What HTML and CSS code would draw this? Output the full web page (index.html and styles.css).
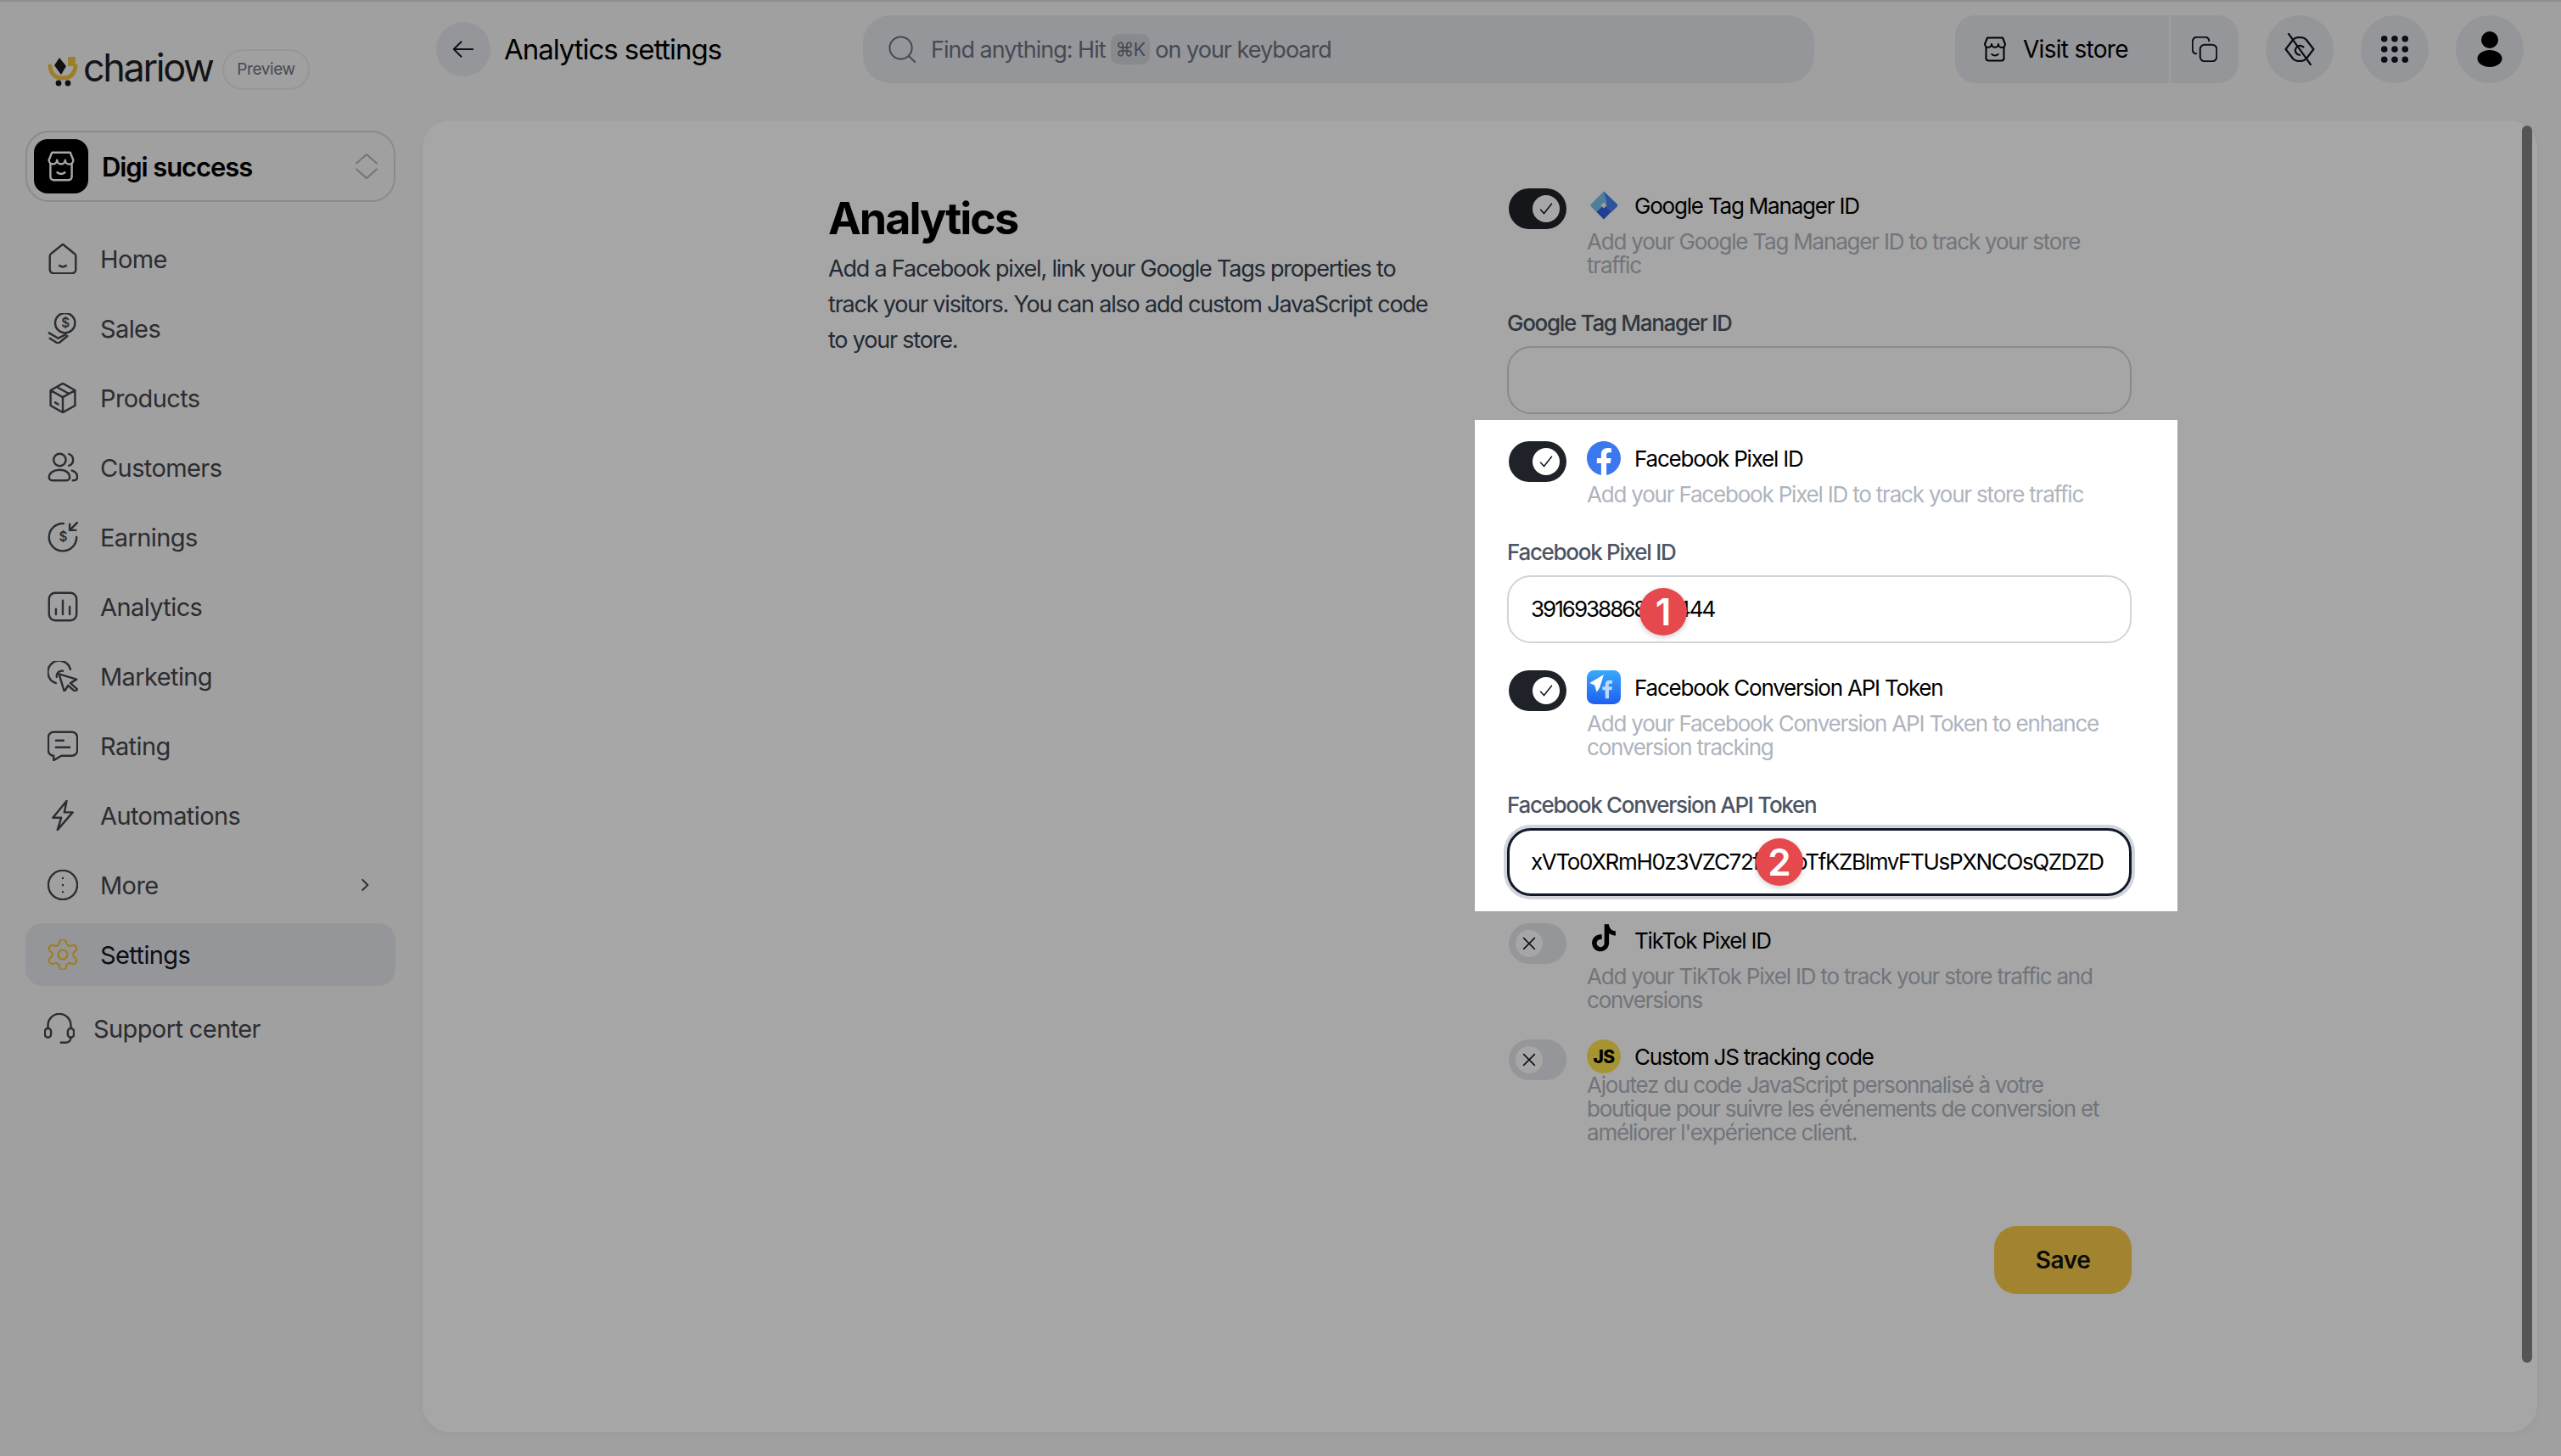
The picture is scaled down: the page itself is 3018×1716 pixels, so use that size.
FILE: index.html
```html
<!DOCTYPE html>
<html lang="en">
<head>
  <meta charset="UTF-8">
  <title>Analytics settings</title>
  <link rel="stylesheet" href="styles.css">
</head>
<body>

  <div class="app">

    <aside class="sidebar">
      <div class="brand">
        <svg class="brand-mark" viewBox="0 0 36 36">
          <path d="M3 12c1 9 6 14 15 14s14-5 15-14" fill="none" stroke="#f2c443" stroke-width="5" stroke-linecap="round"/>
          <path d="M14 2l8 10-6 10-8-11z" fill="#1a1a1a"/>
          <rect x="24" y="1" width="9" height="11" fill="#f2c443"/>
          <circle cx="13" cy="32" r="3.4" fill="#1a1a1a"/>
          <circle cx="24" cy="32" r="3.4" fill="#1a1a1a"/>
        </svg>
        <span class="brand-name">chariow</span>
        <span class="preview-pill">Preview</span>
      </div>

      <div class="store-select">
        <span class="store-avatar">
          <svg class="icon icon-store" viewBox="2 2 20 20"><path d="M5 10v9a2 2 0 0 0 2 2h10a2 2 0 0 0 2-2v-9M4 8l2-5h12l2 5M4 8a2.67 2.67 0 0 0 5.33 0 2.67 2.67 0 0 0 5.33 0A2.67 2.67 0 0 0 20 8M9.5 16c1.5 1.2 3.5 1.2 5 0"/></svg>
        </span>
        <span class="store-name">Digi success</span>
        <svg class="store-arrows" viewBox="0 0 28 30"><path d="M1.5 12L14 1l12.5 11M1.5 18L14 29l12.5-11"/></svg>
      </div>

      <nav class="nav">
        <a class="nav-item">
          <svg class="icon" viewBox="2 2 20 20"><path d="M12 2.5l7.5 6a2 2 0 0 1 1 1.7V19a2.5 2.5 0 0 1-2.5 2.500H6A2.500 2.500 0 0 1 3.500 19v-8.800a2 2 0 0 1 1-1.700zM9.800 16.500c1.400 1 3 1 4.400 0"/></svg>
          <span>Home</span>
        </a>
        <a class="nav-item">
          <svg class="icon" viewBox="2 2 20 20"><circle cx="13.5" cy="8.5" r="6.5"/><text x="13.5" y="11.5" class="icon-text">$</text><path d="M3 15l6 3.5 5-2.5M3.5 18.5L9 22l6-5"/></svg>
          <span>Sales</span>
        </a>
        <a class="nav-item">
          <svg class="icon" viewBox="2 2 20 20"><path d="M12 2.5L20 7v10l-8 4.5L4 17V7zM4 7l8 4.5L20 7M12 11.5v10M8 4.8l8 4.4M7 15l2 1.2"/></svg>
          <span>Products</span>
        </a>
        <a class="nav-item">
          <svg class="icon" viewBox="2 2 20 20"><circle cx="10" cy="7" r="4"/><path d="M16 3.2a4 4 0 0 1 0 7.6M3 18.5c0-3 3-5 7-5s6.5 2 6.5 5a2 2 0 0 1-2 2H5a2 2 0 0 1-2-2zM18 14c2 .6 3.5 2 3.5 4.2 0 1.5-1 2.300-3 2.300"/></svg>
          <span>Customers</span>
        </a>
        <a class="nav-item">
          <svg class="icon" viewBox="2 2 20 20"><path d="M12.5 3.1A9 9 0 1 0 21 12M21.5 2.5l-4.700 4.700M16.5 3.500v4h4"/><text x="12" y="15" class="icon-text">$</text></svg>
          <span>Earnings</span>
        </a>
        <a class="nav-item">
          <svg class="icon" viewBox="2 2 20 20"><rect x="3" y="3" width="18" height="18" rx="4"/><path d="M7.5 17v-3.5M12 17V8M16.5 17v-5"/></svg>
          <span>Analytics</span>
        </a>
        <a class="nav-item">
          <svg class="icon" viewBox="2 2 20 20"><path d="M7.5 16.5A7.5 7.5 0 1 1 17 7.5M8 12.5a3.5 3.5 0 0 1 4-4M9.5 10.5L21 14l-4 2.5 4.5 4-1.5 1.5-4.5-4-2.5 4z"/></svg>
          <span>Marketing</span>
        </a>
        <a class="nav-item">
          <svg class="icon" viewBox="2 2 20 20"><path d="M6 3h12a3.5 3.5 0 0 1 3.5 3.5V15a3.5 3.5 0 0 1-3.5 3.5h-7l-5 3v-3A3.5 3.5 0 0 1 2.5 15V6.5A3.5 3.5 0 0 1 6 3zM7.5 8.5h5M7.5 13h9"/></svg>
          <span>Rating</span>
        </a>
        <a class="nav-item">
          <svg class="icon" viewBox="2 2 20 20"><path d="M14.5 2.5L5.5 13.5H11L8.5 21.5 18.5 10H13z"/></svg>
          <span>Automations</span>
        </a>
        <a class="nav-item">
          <svg class="icon" viewBox="2 2 20 20"><circle cx="12" cy="12" r="9.5"/><path d="M12 7.5v.1M12 12v.1M12 16.5v.1"/></svg>
          <span>More</span>
          <svg class="nav-chevron" viewBox="0 0 24 24"><path d="M8 4l8 8-8 8"/></svg>
        </a>
        <a class="nav-item active">
          <svg class="icon" viewBox="2 2 20 20"><path d="M12.22 2h-.44a2 2 0 0 0-2 2v.18a2 2 0 0 1-1 1.73l-.43.25a2 2 0 0 1-2 0l-.15-.08a2 2 0 0 0-2.73.73l-.22.38a2 2 0 0 0 .73 2.73l.15.1a2 2 0 0 1 1 1.72v.51a2 2 0 0 1-1 1.74l-.15.09a2 2 0 0 0-.73 2.73l.22.38a2 2 0 0 0 2.73.73l.15-.08a2 2 0 0 1 2 0l.43.25a2 2 0 0 1 1 1.73V20a2 2 0 0 0 2 2h.44a2 2 0 0 0 2-2v-.18a2 2 0 0 1 1-1.73l.43-.25a2 2 0 0 1 2 0l.15.08a2 2 0 0 0 2.73-.73l.22-.39a2 2 0 0 0-.73-2.73l-.15-.08a2 2 0 0 1-1-1.74v-.5a2 2 0 0 1 1-1.74l.15-.09a2 2 0 0 0 .73-2.73l-.22-.38a2 2 0 0 0-2.73-.73l-.15.08a2 2 0 0 1-2 0l-.43-.25a2 2 0 0 1-1-1.73V4a2 2 0 0 0-2-2z"/><circle cx="12" cy="12" r="3"/></svg>
          <span>Settings</span>
        </a>
        <a class="nav-item support">
          <svg class="icon" viewBox="2 2 20 20"><path d="M4.5 12v-2a7.5 7.5 0 0 1 15 0v2M19.5 18c0 2-1.5 3.3-3.5 3.3h-3"/><rect x="2.5" y="12" width="4" height="6" rx="2"/><rect x="17.5" y="12" width="4" height="6" rx="2"/></svg>
          <span>Support center</span>
        </a>
      </nav>
    </aside>

    <div class="main">
      <header class="topbar">
        <div class="page-title">
          <button class="back-btn">
            <svg viewBox="0 0 24 24"><path d="M21 12H3M10 5l-7 7 7 7"/></svg>
          </button>
          <h1>Analytics settings</h1>
        </div>

        <div class="search">
          <svg class="icon icon-search" viewBox="1 1 22 22"><circle cx="11" cy="11" r="9"/><path d="M17.5 17.5l5 5"/></svg>
          <span>Find anything: Hit</span>
          <kbd>⌘K</kbd>
          <span>on your keyboard</span>
        </div>

        <div class="actions">
          <div class="visit-group">
            <a class="visit-btn">
              <svg class="icon icon-visit" viewBox="3 2 18 20"><path d="M5 10v9a2 2 0 0 0 2 2h10a2 2 0 0 0 2-2v-9M4 8l2-5h12l2 5M4 8a2.67 2.67 0 0 0 5.33 0 2.67 2.67 0 0 0 5.33 0A2.67 2.67 0 0 0 20 8M9.5 16c1.5 1.2 3.5 1.2 5 0"/></svg>
              Visit store
            </a>
            <a class="copy-btn">
              <svg class="icon icon-visit" viewBox="2 2 20 20"><rect x="8.5" y="8.5" width="13" height="13" rx="3.5"/><path d="M15.5 5.5a3 3 0 0 0-3-3H6A3.5 3.5 0 0 0 2.5 6v6.500a3 3 0 0 0 3 3"/></svg>
            </a>
          </div>
          <a class="round-btn">
            <svg class="icon icon-eye" viewBox="2 1 20 22"><path d="M2.5 12l5-6.500a5 5 0 0 1 3-1.500h3a5 5 0 0 1 3 1.500l5 6.500-5 6.500a5 5 0 0 1-3 1.500h-3a5 5 0 0 1-3-1.500z"/><path d="M14.5 10.5A3.2 3.200 0 1 0 12 16M4.5 1.5l15 21"/></svg>
          </a>
          <a class="round-btn">
            <svg class="icon-grid" viewBox="0 0 36 36"><circle cx="5" cy="5" r="4"/><circle cx="18" cy="5" r="4"/><circle cx="31" cy="5" r="4"/><circle cx="5" cy="18" r="4"/><circle cx="18" cy="18" r="4"/><circle cx="31" cy="18" r="4"/><circle cx="5" cy="31" r="4"/><circle cx="18" cy="31" r="4"/><circle cx="31" cy="31" r="4"/></svg>
          </a>
          <a class="round-btn">
            <svg class="icon-user" viewBox="0 0 30 42"><ellipse cx="15" cy="10" rx="10" ry="10"/><ellipse cx="15" cy="32" rx="14.5" ry="10"/></svg>
          </a>
        </div>
      </header>

      <main class="panel">
        <section class="intro">
          <h2>Analytics</h2>
          <p>Add a Facebook pixel, link your Google Tags properties to<br>track your visitors. You can also add custom JavaScript code<br>to your store.</p>
        </section>

        <section class="settings">

          <div class="integration">
            <div class="toggle on"><span class="knob"><svg viewBox="0 0 16 16"><path d="M3 8.5l3.2 3.5L13 3.5"/></svg></span></div>
            <div class="integration-body">
              <div class="integration-title">
                <svg class="brand-icon" viewBox="-2 -2 28 28">
                  <path d="M12 .5L1.5 11a1.5 1.5 0 0 0 0 2L12 23.5 23 12z" fill="#7bc3f0"/>
                  <path d="M12 .5L23 11a1.5 1.5 0 0 1 0 2l-5 5-6-6 2.500-2.500z" fill="#4a80ef"/>
                  <path d="M12 23.5l-6-6 6-5.500 6 5.500z" fill="#3160e4"/>
                  <path d="M12 9.5l2.500 2.500-2.500 2.500-2.500-2.500z" fill="#f4f6fb"/>
                </svg>
                Google Tag Manager ID
              </div>
              <p class="integration-desc">Add your Google Tag Manager ID to track your store<br>traffic</p>
            </div>
          </div>
          <div class="field">
            <label>Google Tag Manager ID</label>
            <div class="text-input"></div>
          </div>

          <div class="integration">
            <div class="toggle on"><span class="knob"><svg viewBox="0 0 16 16"><path d="M3 8.5l3.2 3.5L13 3.5"/></svg></span></div>
            <div class="integration-body">
              <div class="integration-title">
                <svg class="brand-icon" viewBox="0 0 24 24">
                  <circle cx="12" cy="12" r="11.5" fill="#fff"/>
                  <path d="M24 12.073c0-6.627-5.373-12-12-12s-12 5.373-12 12c0 5.990 4.388 10.954 10.125 11.854v-8.385H7.078v-3.470h3.047V9.430c0-3.007 1.792-4.669 4.533-4.669 1.312 0 2.686.235 2.686.235v2.953H15.830c-1.491 0-1.956.925-1.956 1.874v2.250h3.328l-.532 3.470h-2.796v8.385C19.612 23.027 24 18.062 24 12.073z" fill="#3b78ef"/>
                </svg>
                Facebook Pixel ID
              </div>
              <p class="integration-desc">Add your Facebook Pixel ID to track your store traffic</p>
            </div>
          </div>
          <div class="field">
            <label>Facebook Pixel ID</label>
            <div class="text-input filled">3916938868123444</div>
            <span class="step-badge step-one">1</span>
          </div>

          <div class="integration">
            <div class="toggle on"><span class="knob"><svg viewBox="0 0 16 16"><path d="M3 8.5l3.2 3.5L13 3.5"/></svg></span></div>
            <div class="integration-body">
              <div class="integration-title">
                <svg class="brand-icon" viewBox="0 0 24 24">
                  <defs>
                    <linearGradient id="capiFill" x1="0" y1="0" x2="0" y2="1">
                      <stop offset="0" stop-color="#39a9fb"/>
                      <stop offset="1" stop-color="#1d5ff0"/>
                    </linearGradient>
                  </defs>
                  <rect width="24" height="24" rx="5" fill="url(#capiFill)"/>
                  <path d="M12 3L2 9l3.5 1.5 1.5 5 2-3z" fill="#fff"/>
                  <path d="M13 20v-6h-2v-2.500h2V10c0-2 1-3 3-3h2v2.500h-1.500c-.8 0-1 .4-1 1v1H18l-.4 2.500h-2v6z" fill="#bcd8fb"/>
                </svg>
                Facebook Conversion API Token
              </div>
              <p class="integration-desc">Add your Facebook Conversion API Token to enhance<br>conversion tracking</p>
            </div>
          </div>
          <div class="field">
            <label>Facebook Conversion API Token</label>
            <div class="text-input filled focused">xVTo0XRmH0z3VZC72fJ4uoTfKZBlmvFTUsPXNCOsQZDZD</div>
            <span class="step-badge step-two">2</span>
          </div>

          <div class="integration">
            <div class="toggle"><span class="knob"><svg viewBox="0 0 16 16"><path d="M3 3l10 10M13 3L3 13"/></svg></span></div>
            <div class="integration-body">
              <div class="integration-title">
                <svg class="brand-icon" viewBox="-3 -1 30 30"><path d="M12.525.02c1.310-.02 2.610-.01 3.910-.02.08 1.530.63 3.090 1.750 4.170 1.120 1.110 2.700 1.620 4.240 1.790v4.030c-1.440-.05-2.890-.35-4.200-.97-.57-.26-1.100-.59-1.620-.93-.01 2.920.01 5.840-.02 8.750-.08 1.400-.54 2.790-1.350 3.940-1.310 1.920-3.580 3.170-5.910 3.210-1.430.08-2.860-.31-4.080-1.030-2.020-1.190-3.440-3.370-3.650-5.710-.02-.5-.03-1-.01-1.490.18-1.900 1.120-3.720 2.580-4.960 1.660-1.440 3.980-2.130 6.150-1.720.02 1.480-.04 2.960-.04 4.440-.99-.32-2.150-.23-3.020.37-.63.41-1.110 1.040-1.360 1.750-.21.51-.15 1.070-.14 1.610.24 1.640 1.820 3.020 3.500 2.870 1.120-.01 2.190-.66 2.770-1.610.19-.33.4-.67.41-1.060.1-1.790.06-3.570.07-5.360.01-4.030-.01-8.050.02-12.070z" fill="#000"/></svg>
                TikTok Pixel ID
              </div>
              <p class="integration-desc">Add your TikTok Pixel ID to track your store traffic and<br>conversions</p>
            </div>
          </div>

          <div class="integration">
            <div class="toggle"><span class="knob"><svg viewBox="0 0 16 16"><path d="M3 3l10 10M13 3L3 13"/></svg></span></div>
            <div class="integration-body">
              <div class="integration-title">
                <span class="js-icon">JS</span>
                Custom JS tracking code
              </div>
              <p class="integration-desc tight">Ajoutez du code JavaScript personnalisé à votre<br>boutique pour suivre les événements de conversion et<br>améliorer l'expérience client.</p>
            </div>
          </div>

          <div class="form-footer">
            <button class="save-btn">Save</button>
          </div>
        </section>

        <div class="scrollbar"></div>
      </main>
    </div>
  </div>

  <div class="spotlight"></div>

</body>
</html>
```

FILE: styles.css
```css
* {
  box-sizing: border-box;
}

html,
body {
  margin: 0;
  height: 100%;
  overflow: hidden;
}

body {
  font-family: 'Inter', sans-serif;
  background: #f6f6f6;
  color: #111827;
}

.app {
  display: flex;
  height: 1716px;
  border-top: 2px solid #dadada;
}

/* sidebar */

.sidebar {
  flex: none;
  width: 498px;
  padding: 56px 32px 0 30px;
}

.brand {
  display: flex;
  align-items: center;
  height: 48px;
  padding-left: 26px;
}

.brand-mark {
  width: 36px;
  height: 36px;
  margin-top: 4px;
}

.brand-name {
  margin: -6px 12px 0 6px;
  font-size: 45px;
  letter-spacing: -2.4px;
  color: #1f2024;
}

.preview-pill {
  padding: 0 15px;
  height: 48px;
  line-height: 44px;
  border: 2px solid #e6e6e6;
  border-radius: 24px;
  font-size: 19px;
  letter-spacing: -0.4px;
  color: #6b7280;
}

.store-select {
  display: flex;
  align-items: center;
  height: 84px;
  margin-top: 48px;
  padding: 0 18px 0 8px;
  border: 2px solid #d4d4d4;
  border-radius: 28px;
}

.store-avatar {
  display: flex;
  align-items: center;
  justify-content: center;
  width: 64px;
  height: 64px;
  border-radius: 16px;
  background: #000;
}

.icon-store {
  width: 32px;
  height: 32px;
  color: #fff;
}

.store-name {
  flex: 1;
  margin-left: 16px;
  font-size: 31px;
  font-weight: 600;
  letter-spacing: -1.1px;
  color: #000;
}

.store-arrows {
  width: 28px;
  height: 30px;
  fill: none;
  stroke: #b4b4b4;
  stroke-width: 2.2;
}

.icon {
  flex: none;
  width: 36px;
  height: 36px;
  fill: none;
  stroke: currentColor;
  stroke-width: 1.35;
  stroke-linecap: round;
  stroke-linejoin: round;
}

.icon-text {
  font-size: 8.5px;
  font-weight: 600;
  text-anchor: middle;
  fill: currentColor;
  stroke: none;
}

.nav {
  display: flex;
  flex-direction: column;
  gap: 8px;
  margin-top: 30px;
}

.nav-item {
  display: flex;
  align-items: center;
  height: 74px;
  padding: 0 26px;
  border-radius: 20px;
  font-size: 29px;
  letter-spacing: -0.6px;
  color: #43464d;
}

.nav-item .icon {
  margin-right: 26px;
}

.nav-item span {
  flex: 1;
}

.nav-chevron {
  width: 20px;
  height: 20px;
  fill: none;
  stroke: currentColor;
  stroke-width: 2.4;
}

.nav-item.active {
  background: #e5e7eb;
  color: #111827;
}

.nav-item.active .icon {
  color: #f2c443;
}

.nav-item.support {
  margin-top: 5px;
  padding-left: 22px;
}

.nav-item.support .icon {
  margin-right: 22px;
}

/* top bar */

.main {
  flex: 1;
  display: flex;
  flex-direction: column;
  min-width: 0;
}

.topbar {
  display: flex;
  align-items: center;
  flex: none;
  height: 80px;
  margin: 16px 44px 44px 16px;
}

.page-title {
  display: flex;
  align-items: center;
  flex: none;
  width: 503px;
}

.back-btn {
  display: flex;
  align-items: center;
  justify-content: center;
  width: 64px;
  height: 64px;
  padding: 0;
  border: none;
  border-radius: 50%;
  background: #e5e7eb;
}

.back-btn svg {
  width: 30px;
  height: 30px;
  fill: none;
  stroke: #111827;
  stroke-width: 1.5;
  stroke-linecap: round;
  stroke-linejoin: round;
}

h1 {
  margin: 0 0 0 16px;
  font-size: 33px;
  font-weight: 400;
  letter-spacing: -1.05px;
  color: #000;
}

.search {
  display: flex;
  align-items: center;
  flex: 1;
  height: 80px;
  padding-left: 30px;
  border-radius: 32px;
  background: #e5e7eb;
  font-size: 27px;
  letter-spacing: -1px;
  color: #6b7280;
}

.icon-search {
  width: 32px;
  height: 32px;
  margin-right: 18px;
  stroke-width: 1.4;
}

kbd {
  margin: 0 6px;
  padding: 0 6px;
  height: 36px;
  line-height: 36px;
  border-radius: 10px;
  background: #d1d5db;
  font-family: inherit;
  font-size: 22px;
  letter-spacing: -1px;
}

.actions {
  display: flex;
  align-items: center;
  gap: 32px;
  flex: none;
  margin-left: 166px;
}

.visit-group {
  display: flex;
  gap: 2px;
}

.visit-btn,
.copy-btn {
  display: flex;
  align-items: center;
  height: 80px;
  background: #e5e7eb;
}

.visit-btn {
  width: 252px;
  padding-left: 32px;
  border-radius: 24px 0 0 24px;
  font-size: 28px;
  letter-spacing: -0.7px;
  color: #000;
}

.copy-btn {
  justify-content: center;
  width: 80px;
  border-radius: 0 24px 24px 0;
  color: #111827;
}

.icon-visit {
  width: 30px;
  height: 30px;
}

.visit-btn .icon-visit {
  margin-right: 18px;
}

.round-btn {
  display: flex;
  align-items: center;
  justify-content: center;
  width: 80px;
  height: 80px;
  border-radius: 50%;
  background: #e5e7eb;
  color: #111827;
}

.icon-eye {
  width: 36px;
  height: 38px;
}

.icon-grid {
  width: 34px;
  height: 34px;
  fill: #111827;
}

.icon-user {
  width: 30px;
  height: 42px;
  fill: #000;
}

/* panel */

.panel {
  position: relative;
  display: flex;
  flex: none;
  width: 2492px;
  height: 1546px;
  padding: 80px 0 0 478px;
  border-radius: 32px;
  background: #fff;
  box-shadow: 0 2px 10px rgba(0, 0, 0, 0.05);
}

.intro {
  flex: none;
  width: 800px;
}

.intro h2 {
  margin: 4px 0 6px;
  font-size: 52px;
  line-height: 64px;
  font-weight: 700;
  letter-spacing: -2px;
  color: #000;
}

.intro p {
  margin: 0;
  font-size: 27px;
  line-height: 42px;
  letter-spacing: -1.2px;
  color: #374151;
}

.settings {
  flex: none;
  width: 736px;
}

.integration {
  display: flex;
  margin-bottom: 32px;
}

.toggle {
  display: flex;
  align-items: center;
  flex: none;
  width: 68px;
  height: 48px;
  margin: 0 24px 0 2px;
  padding: 0 8px;
  border-radius: 24px;
  background: #e5e7eb;
}

.toggle.on {
  justify-content: flex-end;
  background: #1f2329;
}

.knob {
  display: flex;
  align-items: center;
  justify-content: center;
  width: 32px;
  height: 32px;
  border-radius: 50%;
  background: #fff;
}

.knob svg {
  width: 22px;
  height: 22px;
  fill: none;
  stroke: #111827;
  stroke-width: 1.1;
}

.integration-body {
  min-width: 0;
}

.integration-title {
  display: flex;
  align-items: center;
  height: 40px;
  font-size: 26px;
  letter-spacing: -1.2px;
  color: #000;
}

.brand-icon {
  flex: none;
  width: 40px;
  height: 40px;
  margin-right: 16px;
}

.js-icon {
  display: flex;
  align-items: center;
  justify-content: center;
  flex: none;
  width: 40px;
  height: 40px;
  margin-right: 16px;
  border-radius: 50%;
  background: #ffe44f;
  font-size: 21px;
  font-weight: 800;
  letter-spacing: -0.6px;
}

.integration-desc {
  margin: 9px 0 0;
  font-size: 26px;
  line-height: 28px;
  letter-spacing: -1.2px;
  color: #aeb4be;
}

.integration-desc.tight {
  margin-top: 0;
}

.field {
  position: relative;
  margin: -32px 0 32px;
  padding-top: 40px;
}

.field label {
  display: block;
  margin-bottom: 13px;
  font-size: 26px;
  line-height: 28px;
  letter-spacing: -1.3px;
  font-weight: 500;
  color: #4b5563;
}

.text-input {
  height: 80px;
  padding: 0 26px;
  border: 2px solid #d1d5db;
  border-radius: 28px;
  background: #fff;
  font-size: 26px;
  line-height: 76px;
  letter-spacing: -2px;
  color: #000;
  white-space: nowrap;
  overflow: hidden;
}

.text-input.focused {
  padding: 0 25px;
  border: 3px solid #111827;
  box-shadow: 0 0 0 4px #d1d5db;
  line-height: 74px;
  letter-spacing: -1.35px;
}

.step-badge {
  position: absolute;
  display: flex;
  align-items: center;
  justify-content: center;
  width: 56px;
  height: 56px;
  border-radius: 50%;
  background: #e5484d;
  box-shadow: 0 2px 6px rgba(0, 0, 0, 0.2);
  font-size: 44px;
  font-weight: 600;
  color: #fff;
}

.step-one {
  left: 156px;
  top: 96px;
}

.step-two {
  left: 293px;
  top: 93px;
}

.form-footer {
  display: flex;
  justify-content: flex-end;
  margin-top: 96px;
}

.save-btn {
  width: 162px;
  height: 80px;
  padding: 0;
  border: none;
  border-radius: 26px;
  background: #f9cb4a;
  font-family: inherit;
  font-size: 28px;
  font-weight: 600;
  letter-spacing: -0.4px;
  color: #111;
}

.scrollbar {
  position: absolute;
  top: 6px;
  right: 6px;
  width: 12px;
  height: 1458px;
  border-radius: 6px;
  background: #838383;
}

/* dimmed page with one cut out area */

.spotlight {
  position: fixed;
  left: 1738px;
  top: 495px;
  width: 828px;
  height: 579px;
  box-shadow: 0 0 0 3200px rgba(0, 0, 0, 0.35);
}
```
